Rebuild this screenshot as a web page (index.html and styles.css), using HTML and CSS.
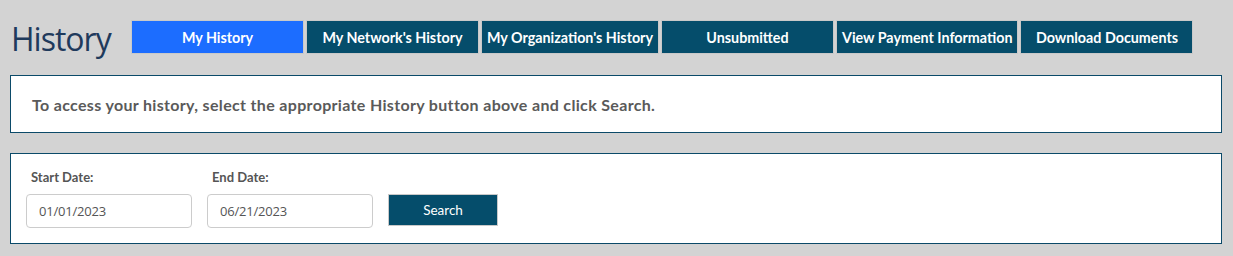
FILE: index.html
```html
<!DOCTYPE html>
<html lang="en">
<head>
<meta charset="utf-8">
<title>History</title>
<link rel="stylesheet" href="styles.css">
</head>
<body>
<header class="topbar">
  <h1 class="title">History</h1>
  <nav class="tabs">
    <button class="tab tab-active">My History</button>
    <button class="tab">My Network's History</button>
    <button class="tab">My Organization's History</button>
    <button class="tab">Unsubmitted</button>
    <button class="tab">View Payment Information</button>
    <button class="tab">Download Documents</button>
  </nav>
</header>
<section class="panel panel-info">
  <p class="info-text">To access your history, select the appropriate History button above and click Search.</p>
</section>
<section class="panel panel-search">
  <form class="search-form">
    <label class="field-label" for="start">Start Date:</label>
    <label class="field-label" for="end">End Date:</label>
    <span></span>
    <input class="date-input" id="start" type="text" value="01/01/2023">
    <input class="date-input" id="end" type="text" value="06/21/2023">
    <button class="search-btn" type="button">Search</button>
  </form>
</section>
</body>
</html>
```
FILE: styles.css
```css
* { box-sizing: border-box; }
html, body { margin: 0; padding: 0; }
body {
  background: #d3d3d3;
  font-family: "Lato", "Liberation Sans", sans-serif;
  width: 1233px;
  height: 256px;
  overflow: hidden;
}
.topbar {
  display: flex;
  align-items: flex-start;
  height: 34px;
  margin-top: 20px;
  padding-left: 11px;
}
.title {
  margin: 0;
  padding-top: 4px;
  height: 34px;
  width: 120px;
  font-family: "Open Sans", "Noto Sans", sans-serif;
  font-weight: 400;
  font-size: 32px;
  letter-spacing: -1px;
  color: #1f3a5c;
  line-height: 30px;
}
.tabs {
  display: flex;
  gap: 2px;
}
.tab {
  height: 34px;
  min-width: 173px;
  padding: 0 5px;
  border: 1px solid #c9c9c9;
  background: #054d6b;
  color: #fff;
  font-family: "Lato", "Liberation Sans", sans-serif;
  font-weight: 700;
  font-size: 14.3px;
  white-space: nowrap;
  cursor: pointer;
}
.tab-active { background: #1c6dff; }
.panel {
  margin: 0 11px 0 10px;
  background: #fff;
  border: 1px solid #0b4a69;
}
.panel-info {
  margin-top: 21px;
  height: 58px;
  display: flex;
  align-items: center;
  padding-left: 21px;
}
.info-text {
  margin: 0;
  font-weight: 700;
  font-size: 16px;
  letter-spacing: 0.33px;
  color: #5a5a5a;
}
.panel-search {
  margin-top: 20px;
  height: 91px;
  padding: 15px;
}
.search-form {
  display: grid;
  grid-template-columns: 166px 166px 110px;
  grid-template-rows: 17px 34px;
  column-gap: 15px;
  row-gap: 8px;
}
.field-label {
  padding-left: 5px;
  font-weight: 700;
  font-size: 13px;
  line-height: 17px;
  color: #555;
}
.date-input {
  width: 166px;
  height: 34px;
  border: 1px solid #cccccc;
  border-radius: 4px;
  padding: 0 12px;
  font-family: "Open Sans", "Noto Sans", sans-serif;
  font-size: 13px;
  letter-spacing: -0.2px;
  color: #555;
  background: #fff;
}
.search-btn {
  align-self: start;
  height: 32px;
  border: 1px solid #c9c9c9;
  background: #054d6b;
  color: #fff;
  font-family: "Lato", "Liberation Sans", sans-serif;
  font-size: 13.5px;
  font-weight: 400;
  cursor: pointer;
}
```
